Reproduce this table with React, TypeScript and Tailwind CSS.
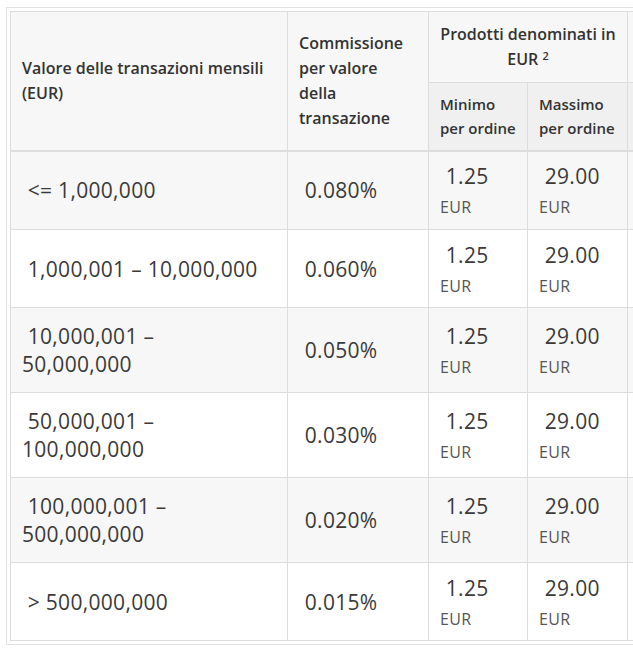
const rows = [
  { range: ["\u00a0<= 1,000,000"], fee: "0.080%", h: "h-[79px]", bg: "bg-[#f7f7f7]" },
  { range: ["\u00a01,000,001 \u2013 10,000,000"], fee: "0.060%", h: "h-[78px]", bg: "bg-white" },
  { range: ["\u00a010,000,001 \u2013", "50,000,000"], fee: "0.050%", h: "h-[85px]", bg: "bg-[#f7f7f7]" },
  { range: ["\u00a050,000,001 \u2013", "100,000,000"], fee: "0.030%", h: "h-[85px]", bg: "bg-white" },
  { range: ["\u00a0100,000,001 \u2013", "500,000,000"], fee: "0.020%", h: "h-[85px]", bg: "bg-[#f7f7f7]" },
  { range: ["\u00a0> 500,000,000"], fee: "0.015%", h: "h-[78px]", bg: "bg-white" },
];

function Amount({ value }: { value: string }) {
  return (
    <div>
      <div className="text-[21px] leading-[34px] tracking-[0.3px]">{"\u00a0" + value}</div>
      <div className="text-[16px] leading-[28px] tracking-[0.4px] text-[#555]">EUR</div>
    </div>
  );
}

export default function App() {
  const cell = "border border-[#dddddd] px-[11px] align-middle";
  const head = "border border-[#dddddd] px-[11px] align-middle font-semibold text-[#333] text-[16px] leading-[25px]";
  const sub = "border border-[#dddddd] border-b-2 px-[11px] align-middle font-semibold text-[#333] text-[15px] leading-[24px] text-left";

  return (
    <div
      className="w-[633px] h-[651px] overflow-hidden bg-white"
      style={{ fontFamily: "'Open Sans', Lato, sans-serif" }}
    >
      <div className="ml-[6px] mt-[7px] w-[800px] border border-[#e2e2e2] p-[3px]">
        <table className="table-fixed border-collapse w-[717px] text-[#3a3a3a]">
          <colgroup>
            <col className="w-[277px]" />
            <col className="w-[141px]" />
            <col className="w-[99px]" />
            <col className="w-[100px]" />
            <col className="w-[100px]" />
          </colgroup>
          <thead>
            <tr className="h-[71px] bg-[#f7f7f7]">
              <th rowSpan={2} className={`${head} text-left border-b-2`}>
                Valore delle transazioni mensili (EUR)
              </th>
              <th rowSpan={2} className={`${head} text-left border-b-2`}>
                Commissione per valore della transazione
              </th>
              <th colSpan={2} className={`${head} text-center`}>
                Prodotti denominati in EUR <sup className="text-[11px] font-semibold">2</sup>
              </th>
              <th className={`${head} text-center`}>&nbsp;</th>
            </tr>
            <tr className="h-[68px] bg-[#f0f0f0]">
              <th className={sub}>Minimo per ordine</th>
              <th className={sub}>Massimo per ordine</th>
              <th className={sub}>&nbsp;</th>
            </tr>
          </thead>
          <tbody>
            {rows.map((r) => (
              <tr key={r.fee} className={`${r.h} ${r.bg}`}>
                <td className={`${cell} text-[21px] leading-[28px] tracking-[0.3px]`}>
                  {r.range.map((l) => (
                    <div key={l}>{l}</div>
                  ))}
                </td>
                <td className={`${cell} text-[21px] leading-[28px] tracking-[0.3px]`}>{"\u00a0" + r.fee}</td>
                <td className={cell}>
                  <Amount value="1.25" />
                </td>
                <td className={cell}>
                  <Amount value="29.00" />
                </td>
                <td className={cell}>&nbsp;</td>
              </tr>
            ))}
          </tbody>
        </table>
      </div>
    </div>
  );
}
